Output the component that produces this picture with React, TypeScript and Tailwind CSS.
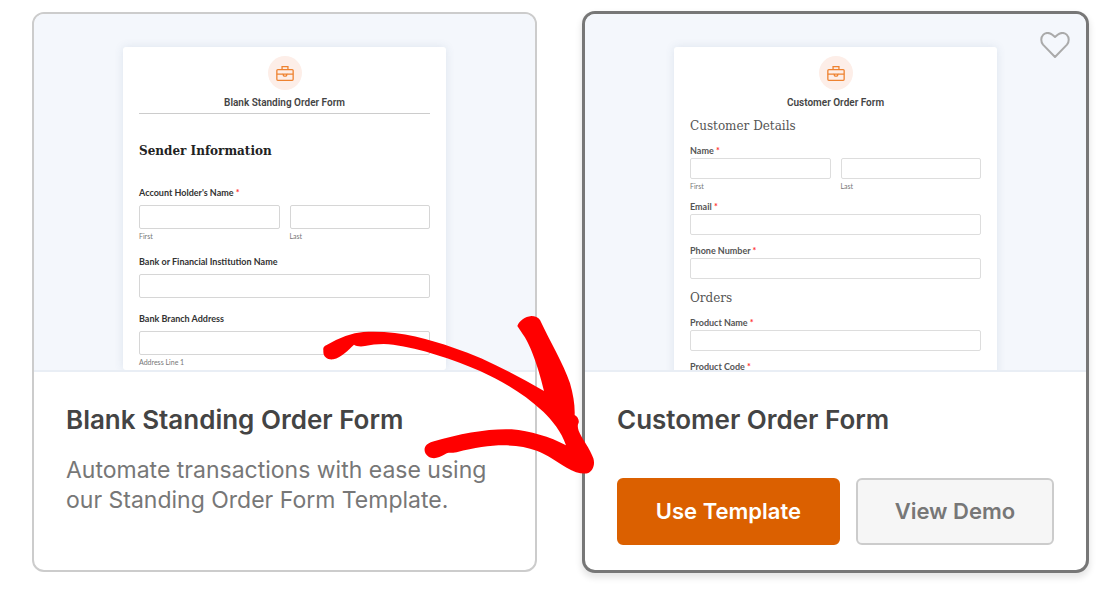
import { useId } from 'react'
import type { ReactNode } from 'react'
import clsx from 'clsx'

/** Briefcase badge shown on top of every template thumbnail. */
function BriefcaseBadge() {
  return (
    <span className="flex size-[34px] items-center justify-center rounded-full bg-[#fdeee8]">
      <svg viewBox="0 0 54 46" className="h-[15px] w-[18px]" fill="none" stroke="#ee8230" strokeWidth="4" aria-hidden="true">
        <rect x="2" y="11" width="50" height="33" rx="3" />
        <path d="M18 11V2h18v9M2 25h19M33 25h19" />
        <path d="M22 25h10v4l-2 2h-6l-2-2z" />
      </svg>
    </span>
  )
}

/** Hand-drawn arrow that leads from the first card to the buttons of the second. */
function Arrow() {
  return (
    <svg
      viewBox="0 0 900 570"
      className="pointer-events-none absolute left-[310px] top-[300px] z-10 h-[190px] w-[300px]"
      fill="#ff0000"
      aria-hidden="true"
    >
      <path d="M40 150Q38 140 50 135Q110 100 160 96C260 90 350 115 430 143C520 172 610 220 702 273C690 220 665 140 640 105Q630 90 622 78C628 62 645 50 664 48C675 48 685 52 690 60C720 125 760 190 780 250C790 285 795 315 794 345C803 350 808 360 806 368C802 374 803 382 806 392C815 415 840 445 850 475C856 495 848 512 835 519C820 524 795 518 770 503C740 486 715 465 680 452C620 430 540 430 440 457C425 460 415 456 405 463C390 472 375 477 363 473C350 468 342 458 344 445C348 432 358 428 372 424C450 400 540 385 605 388C660 393 720 410 768 436C755 395 725 360 700 335C640 280 580 245 510 213C430 178 330 145 250 134C220 130 190 133 165 138C150 141 138 138 132 134C115 150 95 172 70 178C52 180 40 170 40 155Z" />
    </svg>
  )
}

function Label({ id, text, required, soft }: { id: string; text: string; required?: boolean; soft?: boolean }) {
  return (
    <label htmlFor={id} className={clsx('block text-[9px] leading-[12px] font-bold', soft ? 'text-[#555]' : 'text-[#333]')}>
      {text}
      {required && <span className="text-[#f33]"> *</span>}
    </label>
  )
}

/** One labelled form row; `subs` splits it into columns with a caption under each box. */
function Field({ label, required, subs, compact }: { label: string; required?: boolean; subs?: string[]; compact?: boolean }) {
  const id = useId()
  const box = clsx('block w-full rounded-[2px] border bg-white', compact ? 'h-[21px] border-[#ddd]' : 'h-6 border-[#d6d6d6]')
  const boxes = subs ?? ['']
  return (
    <div>
      <Label id={`${id}-0`} text={label} required={required} soft={compact} />
      <div className={clsx('flex gap-[10px]', compact ? 'mt-px' : 'mt-[6px]')}>
        {boxes.map((sub, i) => (
          <div key={sub} className="flex-1">
            <input id={`${id}-${i}`} type="text" aria-label={sub || undefined} className={box} />
            {sub && <span className="mt-[2px] block text-[7px] leading-[10px] text-[#777]">{sub}</span>}
          </div>
        ))}
      </div>
    </div>
  )
}

/** Upper part of a card: the form's sheet on a pale backdrop, cut off at the divider. */
function Preview({ title, children }: { title: string; children: ReactNode }) {
  return (
    <div className="h-[358px] overflow-hidden rounded-t-[10px] border-b-2 border-[#e9eef5] bg-[#f4f7fc] px-[89px] pt-[33px]">
      <div className="min-h-full rounded-[3px] bg-white px-4 pt-[9px] font-[Lato,sans-serif] shadow-[0_0_10px_rgba(60,90,130,0.12)]">
        <div className="flex flex-col items-center">
          <BriefcaseBadge />
          <p className="mt-[6px] font-[Roboto,sans-serif] text-[10px] leading-[14px] font-semibold text-[#444]">{title}</p>
        </div>
        {children}
      </div>
    </div>
  )
}

function Card({
  name,
  active,
  preview,
  children,
}: {
  name: string
  active?: boolean
  preview: ReactNode
  children: ReactNode
}) {
  return (
    <article
      className={clsx(
        'relative rounded-xl border-2 bg-white pb-[25px]',
        active ? 'border-[#777] shadow-[0_0_0_1px_#777,0_4px_6px_2px_rgba(0,0,0,0.1)]' : 'border-[#ccc]',
      )}
    >
      {preview}
      <div className="px-8 pt-8">
        <h2 className="text-[26px] leading-8 font-semibold text-[#444]">{name}</h2>
        {children}
      </div>
    </article>
  )
}

export default function App() {
  return (
    <main className="relative grid min-h-screen grid-cols-2 items-stretch gap-[46px] bg-white pt-3 pr-7 pb-[29px] pl-8 font-[Inter,sans-serif]">
      <Card
        name="Blank Standing Order Form"
        preview={
          <Preview title="Blank Standing Order Form">
            <div className="mt-[3px] border-b border-[#ccc]" />
            <h3 className="mt-[27px] font-['DejaVu_Serif',serif] text-[12px] leading-5 font-bold text-[#222]">Sender Information</h3>
            <div className="mt-[26px] flex flex-col gap-[15px]">
              <Field label="Account Holder's Name" required subs={['First', 'Last']} />
              <Field label="Bank or Financial Institution Name" />
              <Field label="Bank Branch Address" subs={['Address Line 1']} />
            </div>
          </Preview>
        }
      >
        <p className="mt-[19px] text-[23px] leading-[30px] text-[#777]">
          Automate transactions with ease using our Standing Order Form Template.
        </p>
      </Card>

      <Card
        name="Customer Order Form"
        active
        preview={
          <Preview title="Customer Order Form">
            <h3 className="mt-[6px] font-['DejaVu_Serif',serif] text-[12px] leading-5 text-[#555]">Customer Details</h3>
            <div className="mt-[9px] flex flex-col gap-[10px]">
              <Field compact label="Name" required subs={['First', 'Last']} />
              <Field compact label="Email" required />
              <Field compact label="Phone Number" required />
            </div>
            <h3 className="mt-[9px] font-['DejaVu_Serif',serif] text-[12px] leading-5 text-[#555]">Orders</h3>
            <div className="mt-[9px] flex flex-col gap-[10px]">
              <Field compact label="Product Name" required />
              <Field compact label="Product Code" required />
            </div>
          </Preview>
        }
      >
        <button type="button" aria-label="Add to favorites" className="absolute top-[18px] right-4">
          <svg viewBox="0 0 90 78" className="h-[26px] w-[30px]" fill="none" stroke="#aaa" strokeWidth="6" strokeLinejoin="round" aria-hidden="true">
            <path d="M45 15L37 8C29 1 17 1 10 8C2 16 2 29 9 38L45 75L81 38C88 29 88 16 80 8C73 1 61 1 53 8Z" />
          </svg>
        </button>
        <div className="mt-[42px] flex gap-4 text-[22px] leading-[27px] font-semibold">
          <button type="button" className="flex-auto rounded-md border-2 border-[#db6000] bg-[#db6000] py-[18px] whitespace-nowrap text-white">
            Use Template
          </button>
          <button type="button" className="flex-auto rounded-md border-2 border-[#ccc] bg-[#f6f6f6] py-[18px] whitespace-nowrap text-[#777]">
            View Demo
          </button>
        </div>
      </Card>

      <Arrow />
    </main>
  )
}
